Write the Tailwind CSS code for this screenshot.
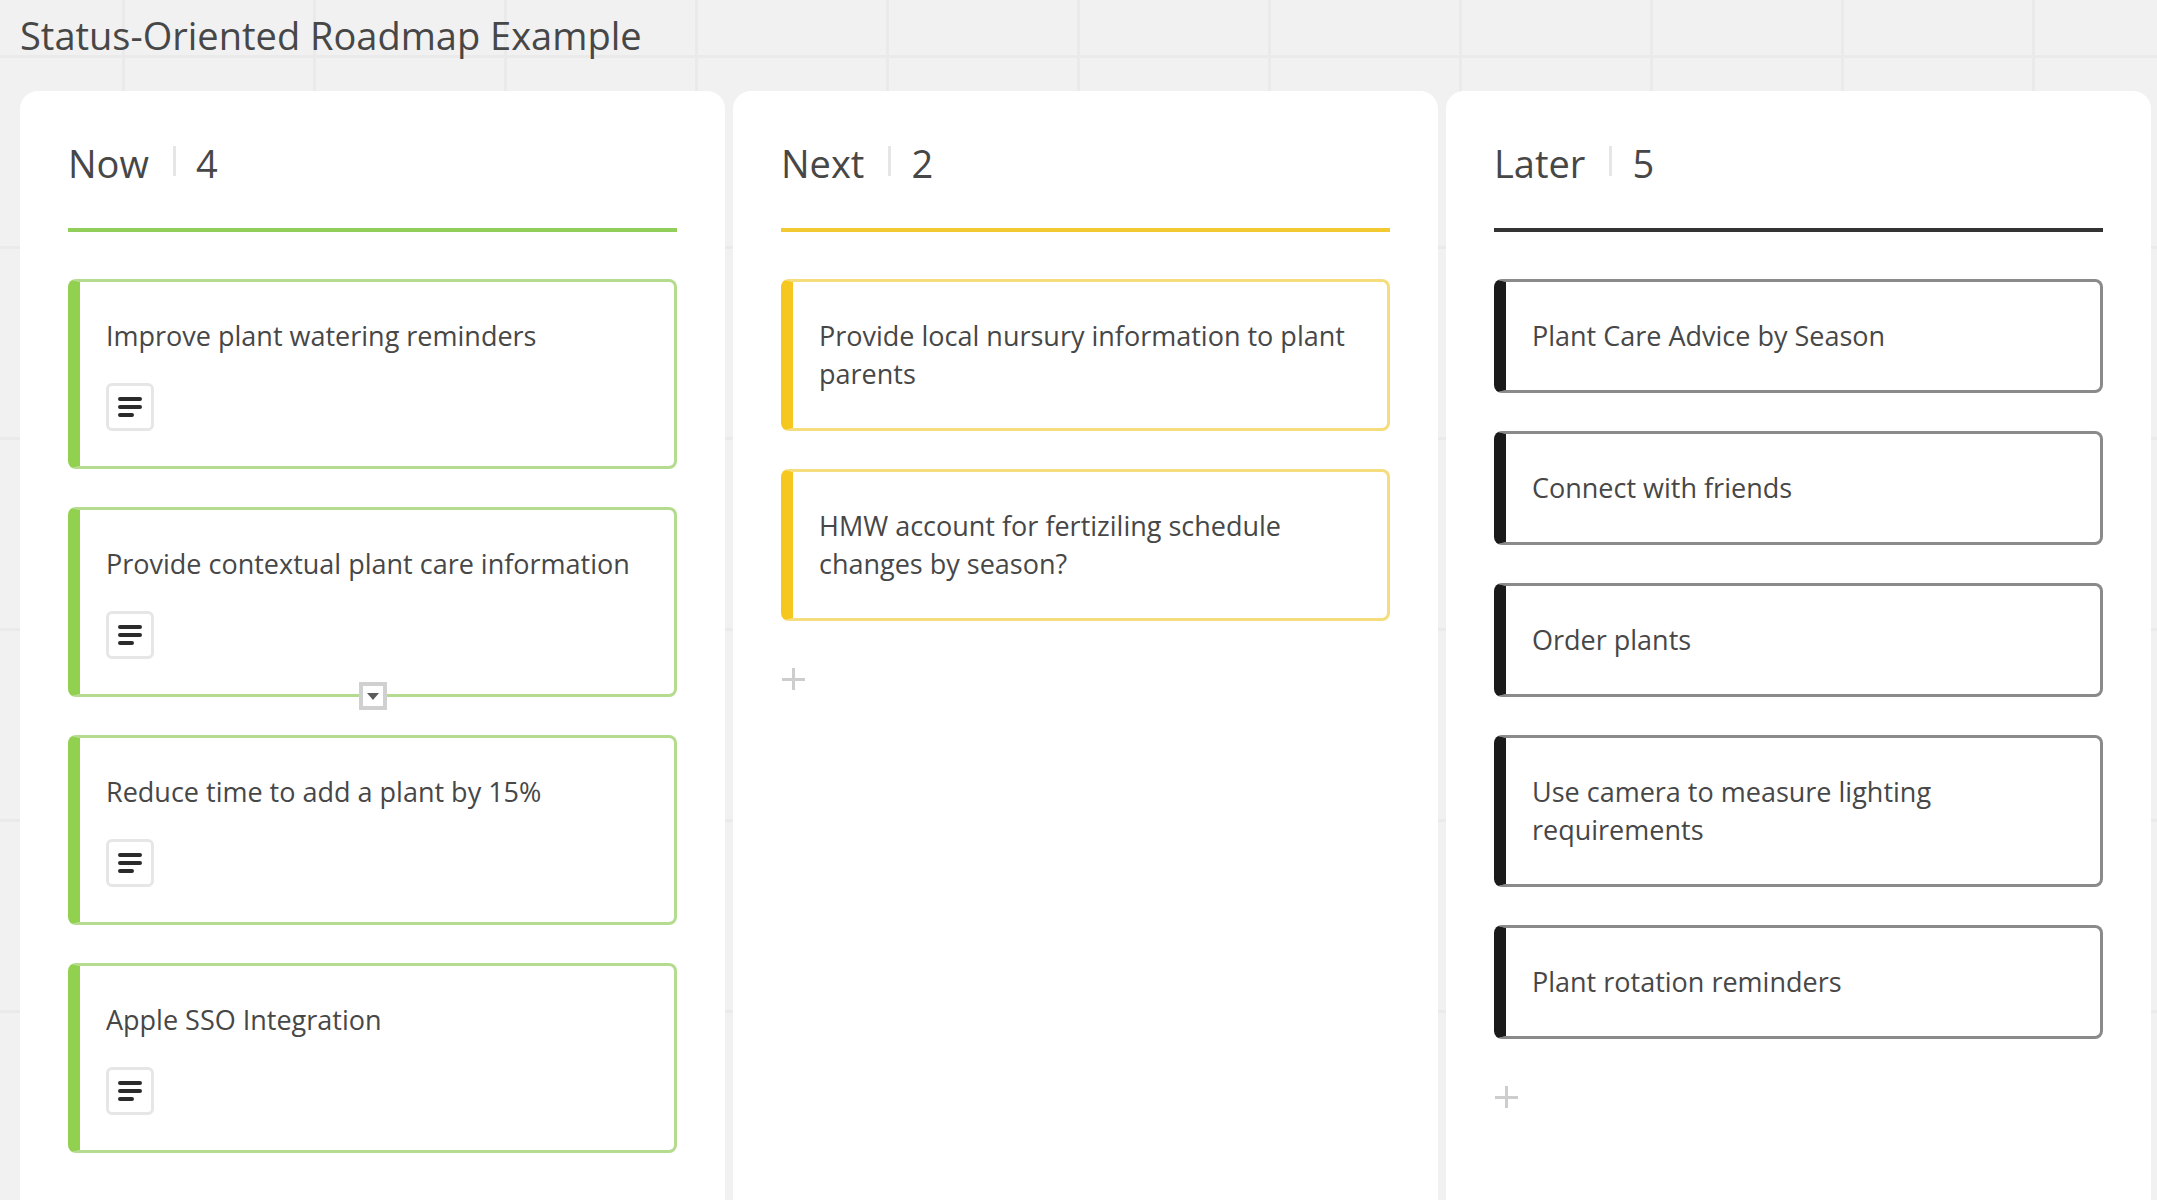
<!DOCTYPE html>
<html lang="en">
<head>
  <meta charset="UTF-8" />
  <meta name="viewport" content="width=device-width, initial-scale=1.0" />
  <title>Status-Oriented Roadmap Example</title>
  <script src="https://cdn.jsdelivr.net/npm/@tailwindcss/browser@4"></script>
</head>
<body class="h-screen overflow-hidden flex flex-col bg-[#f1f1f1] bg-[linear-gradient(to_right,#eaeaea_3px,transparent_3px),linear-gradient(to_bottom,#eaeaea_3px,transparent_3px)] bg-[size:191px_191px] bg-[position:122px_55px] font-['Open_Sans',sans-serif] text-[#474747]">

  <svg class="hidden">
    <symbol id="lines" viewBox="0 0 24 22">
      <path d="M2 3h20M2 11h20M2 19h12" fill="none" stroke="#2b2b2b" stroke-width="4" stroke-linecap="round" />
    </symbol>
    <symbol id="plus" viewBox="0 0 24 24">
      <path d="M12.5 1v22M1 12.5h23" fill="none" stroke="#cdcdcd" stroke-width="3" />
    </symbol>
  </svg>

  <header class="h-[91px] shrink-0 px-5 pt-2">
    <h1 class="text-[38px] leading-[54px]">Status-Oriented Roadmap Example</h1>
  </header>

  <main class="flex-1 min-h-0 grid grid-cols-3 gap-2 pl-5 pr-[6px]">

    <!-- Now -->
    <section class="bg-white rounded-t-[18px] px-12 pt-11">
      <div class="flex items-center pb-[37px] border-b-4 border-[#92ce5a] box-content h-14 text-[38px]">
        <h2>Now</h2>
        <span class="w-[3px] h-[30px] ml-6 mr-5 mb-1 bg-[#e6e6e6]"></span>
        <span>4</span>
      </div>
      <ul class="mt-[47px] flex flex-col gap-[38px] text-[27px] leading-[38px]">
        <li class="border-3 border-l-12 border-[#b5dc8e] border-l-[#92d050] rounded-lg pl-[26px] pr-6 py-[35px]">
          <p>Improve plant watering reminders</p>
          <button aria-label="Description" class="mt-7 size-12 flex items-center justify-center border-3 border-[#e6e6e6] rounded-md"><svg class="w-6 h-[22px]"><use href="#lines" /></svg></button>
        </li>
        <li class="relative border-3 border-l-12 border-[#b5dc8e] border-l-[#92d050] rounded-lg pl-[26px] pr-6 py-[35px]">
          <p>Provide contextual plant care information</p>
          <button aria-label="Description" class="mt-7 size-12 flex items-center justify-center border-3 border-[#e6e6e6] rounded-md"><svg class="w-6 h-[22px]"><use href="#lines" /></svg></button>
          <button aria-label="Expand" class="absolute -left-3 -right-[3px] mx-auto -bottom-4 size-7 flex items-center justify-center bg-white border-4 border-[#d0d0d0]">
            <svg class="w-3 h-[7px]" viewBox="0 0 12 7"><path d="M0 0h12L6 7z" fill="#5c5c5c" /></svg>
          </button>
        </li>
        <li class="border-3 border-l-12 border-[#b5dc8e] border-l-[#92d050] rounded-lg pl-[26px] pr-6 py-[35px]">
          <p>Reduce time to add a plant by 15%</p>
          <button aria-label="Description" class="mt-7 size-12 flex items-center justify-center border-3 border-[#e6e6e6] rounded-md"><svg class="w-6 h-[22px]"><use href="#lines" /></svg></button>
        </li>
        <li class="border-3 border-l-12 border-[#b5dc8e] border-l-[#92d050] rounded-lg pl-[26px] pr-6 py-[35px]">
          <p>Apple SSO Integration</p>
          <button aria-label="Description" class="mt-7 size-12 flex items-center justify-center border-3 border-[#e6e6e6] rounded-md"><svg class="w-6 h-[22px]"><use href="#lines" /></svg></button>
        </li>
      </ul>
      <button aria-label="Add card to Now" class="mt-[38px] h-10 flex items-center"><svg class="size-6"><use href="#plus" /></svg></button>
    </section>

    <!-- Next -->
    <section class="bg-white rounded-t-[18px] px-12 pt-11">
      <div class="flex items-center pb-[37px] border-b-4 border-[#f2c931] box-content h-14 text-[38px]">
        <h2>Next</h2>
        <span class="w-[3px] h-[30px] ml-6 mr-5 mb-1 bg-[#e6e6e6]"></span>
        <span>2</span>
      </div>
      <ul class="mt-[47px] flex flex-col gap-[38px] text-[27px] leading-[38px]">
        <li class="border-3 border-l-12 border-[#f5dc7c] border-l-[#f5c71f] rounded-lg pl-[26px] pr-6 py-[35px]">
          <p>Provide local nursury information to plant parents</p>
        </li>
        <li class="border-3 border-l-12 border-[#f5dc7c] border-l-[#f5c71f] rounded-lg pl-[26px] pr-6 py-[35px]">
          <p>HMW account for fertiziling schedule changes by season?</p>
        </li>
      </ul>
      <button aria-label="Add card to Next" class="mt-[38px] h-10 flex items-center"><svg class="size-6"><use href="#plus" /></svg></button>
    </section>

    <!-- Later -->
    <section class="bg-white rounded-t-[18px] px-12 pt-11">
      <div class="flex items-center pb-[37px] border-b-4 border-[#333333] box-content h-14 text-[38px]">
        <h2>Later</h2>
        <span class="w-[3px] h-[30px] ml-6 mr-5 mb-1 bg-[#e6e6e6]"></span>
        <span>5</span>
      </div>
      <ul class="mt-[47px] flex flex-col gap-[38px] text-[27px] leading-[38px]">
        <li class="border-3 border-l-12 border-[#8a8a8a] border-l-[#1a1a1a] rounded-lg pl-[26px] pr-6 py-[35px]">
          <p>Plant Care Advice by Season</p>
        </li>
        <li class="border-3 border-l-12 border-[#8a8a8a] border-l-[#1a1a1a] rounded-lg pl-[26px] pr-6 py-[35px]">
          <p>Connect with friends</p>
        </li>
        <li class="border-3 border-l-12 border-[#8a8a8a] border-l-[#1a1a1a] rounded-lg pl-[26px] pr-6 py-[35px]">
          <p>Order plants</p>
        </li>
        <li class="border-3 border-l-12 border-[#8a8a8a] border-l-[#1a1a1a] rounded-lg pl-[26px] pr-6 py-[35px]">
          <p>Use camera to measure lighting requirements</p>
        </li>
        <li class="border-3 border-l-12 border-[#8a8a8a] border-l-[#1a1a1a] rounded-lg pl-[26px] pr-6 py-[35px]">
          <p>Plant rotation reminders</p>
        </li>
      </ul>
      <button aria-label="Add card to Later" class="mt-[38px] h-10 flex items-center"><svg class="size-6"><use href="#plus" /></svg></button>
    </section>

  </main>

</body>
</html>
